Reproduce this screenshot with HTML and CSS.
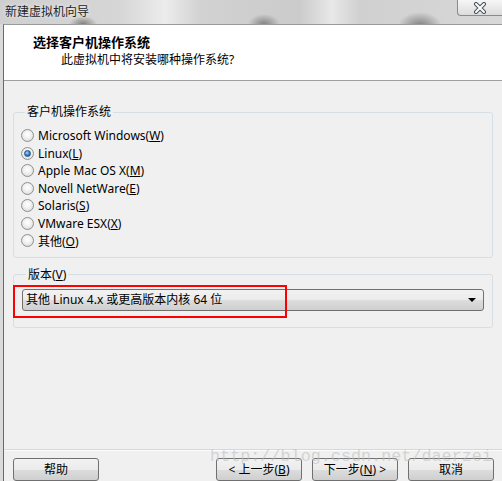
FILE: index.html
```html
<!DOCTYPE html>
<html lang="zh-CN">
<head>
<meta charset="utf-8">
<title>新建虚拟机向导</title>
<link rel="stylesheet" href="styles.css">
</head>
<body>
<div class="screen">
  <div class="titlebar">
    <span class="title">新建虚拟机向导</span>
    <div class="close">
      <svg width="16" height="12" viewBox="0 0 16 12">
        <path d="M4 2 L12 10 M12 2 L4 10" stroke="#4a4f5a" stroke-width="4" stroke-linecap="round"/>
        <path d="M4 2 L12 10 M12 2 L4 10" stroke="#ffffff" stroke-width="2" stroke-linecap="round"/>
      </svg>
    </div>
  </div>
  <div class="window">
    <div class="header">
      <div class="h-title">选择客户机操作系统</div>
      <div class="h-sub">此虚拟机中将安装哪种操作系统?</div>
    </div>
    <div class="content">
      <fieldset class="group os">
        <legend>客户机操作系统</legend>
        <ul class="radios">
          <li><span class="radio"></span><span class="label">Microsoft Windows(<u>W</u>)</span></li>
          <li><span class="radio on"></span><span class="label">Linux(<u>L</u>)</span></li>
          <li><span class="radio"></span><span class="label">Apple Mac OS X(<u>M</u>)</span></li>
          <li><span class="radio"></span><span class="label">Novell NetWare(<u>E</u>)</span></li>
          <li><span class="radio"></span><span class="label">Solaris(<u>S</u>)</span></li>
          <li><span class="radio"></span><span class="label">VMware ESX(<u>X</u>)</span></li>
          <li><span class="radio"></span><span class="label">其他(<u>O</u>)</span></li>
        </ul>
      </fieldset>
      <fieldset class="group ver">
        <legend>版本(<u>V</u>)</legend>
        <div class="select">
          <span class="select-text">其他 Linux 4.x 或更高版本内核 64 位</span>
          <span class="arrow"></span>
        </div>
      </fieldset>
    </div>
    <div class="footer">
      <button class="btn">帮助</button>
      <div class="nav">
        <button class="btn">&lt; 上一步(<u>B</u>)</button>
        <button class="btn">下一步(<u>N</u>) &gt;</button>
        <button class="btn">取消</button>
      </div>
    </div>
  </div>
  <div class="highlight"></div>
  <div class="watermark">http://blog.csdn.net/daerzei</div>
</div>
</body>
</html>
```
FILE: styles.css
```css
html, body {
  margin: 0;
  padding: 0;
}

.screen {
  width: 502px;
  height: 481px;
  position: relative;
  overflow: hidden;
  display: flex;
  flex-direction: column;
  background: #dadada;
  font-family: "Noto Sans", "Noto Sans CJK SC", sans-serif;
  font-size: 12px;
  color: #000;
}

.titlebar {
  height: 24px;
  flex: none;
  display: flex;
  justify-content: space-between;
  align-items: flex-start;
  background:
    radial-gradient(ellipse 14px 8px at 83px 24px, rgba(60,60,60,0.55), rgba(60,60,60,0) 100%),
    radial-gradient(ellipse 16px 10px at 264px 24px, rgba(60,60,60,0.5), rgba(60,60,60,0) 100%),
    radial-gradient(ellipse 22px 14px at 420px 26px, rgba(70,70,70,0.6), rgba(70,70,70,0) 100%),
    linear-gradient(90deg, #cfcfcf 0, #d6d6d6 120px, #ececec 165px, #d2d2d2 200px, #cbcbcb 300px, #e8e8e8 332px, #d0d0d0 360px, #d8d8d8 502px);
}

.title {
  padding-left: 5px;
  line-height: 24px;
  color: #1e1e1e;
  text-shadow: 0 0 4px rgba(255,255,255,0.9);
}

.close {
  width: 45px;
  height: 16px;
  box-sizing: border-box;
  border: 1px solid #8a8a8a;
  border-top: none;
  border-right: none;
  border-radius: 0 0 0 4px;
  background: linear-gradient(#f6f6f6, #dcdcdc);
  display: flex;
  align-items: center;
  justify-content: center;
}

.window {
  flex: 1;
  margin-left: 3px;
  border-left: 1px solid #6a6a6a;
  border-top: 1px solid #9a9a9a;
  background: #f0f0f0;
  display: flex;
  flex-direction: column;
}

.header {
  height: 56px;
  box-sizing: border-box;
  padding: 8px 0 0 29px;
  background: #fff;
  border-bottom: 1px solid #a0a0a0;
  line-height: 18px;
}

.h-title {
  font-weight: bold;
  font-size: 13px;
}

.h-sub {
  padding-left: 28px;
}

.content {
  display: flex;
  flex-direction: column;
}

.group {
  margin: 0 9px;
  border: 1px solid #d5dfe5;
  border-radius: 3px;
  min-width: 0;
}

.group legend {
  margin-left: 4px;
  padding: 0 2px;
  line-height: 16px;
}

.os {
  margin-top: 23px;
  padding: 7px 7px 7px;
}

.radios {
  list-style: none;
  margin: 0;
  padding: 0;
}

.radios li {
  height: 17.5px;
  display: flex;
  align-items: center;
  gap: 4px;
}

.label {
  white-space: nowrap;
}

.radio {
  width: 13px;
  height: 13px;
  box-sizing: border-box;
  border-radius: 50%;
  border: 1px solid #8e8f8f;
  background: radial-gradient(circle at 50% 40%, #ffffff 0, #f4f4f4 35%, #d4d4d4 100%);
  display: flex;
  align-items: center;
  justify-content: center;
  flex: none;
}

.radio.on::after {
  content: "";
  width: 5px;
  height: 5px;
  border-radius: 50%;
  border: 1px solid #1c4f85;
  background: radial-gradient(circle at 40% 35%, #9fd3ff 0, #2f7fcf 55%, #124a8a 100%);
}

.ver {
  margin-top: 9px;
  padding: 6px 8px 16px;
}

.select {
  height: 22px;
  box-sizing: border-box;
  border: 1px solid #707070;
  border-radius: 3px;
  background: linear-gradient(#f2f2f2 0, #ebebeb 50%, #dddddd 50%, #cfcfcf 100%);
  display: flex;
  align-items: center;
  justify-content: space-between;
  padding: 0 7px 0 3px;
}

.select-text {
  line-height: 18px;
}

.arrow {
  width: 0;
  height: 0;
  border-left: 4px solid transparent;
  border-right: 4px solid transparent;
  border-top: 4px solid #000;
}

.footer {
  margin-top: auto;
  border-top: 1px solid #d8d8d8;
  box-shadow: inset 0 1px 0 #fbfbfb;
  padding: 8px 8px 0 9px;
  display: flex;
  justify-content: space-between;
  height: 32px;
  box-sizing: border-box;
}

.nav {
  display: flex;
  gap: 10px;
}

.btn {
  width: 86px;
  height: 23px;
  flex: none;
  border: 1px solid #707070;
  border-radius: 3px;
  background: linear-gradient(#f2f2f2 0, #ebebeb 50%, #dddddd 50%, #cfcfcf 100%);
  font-family: inherit;
  font-size: 12px;
  color: #000;
  padding: 0;
  line-height: 21px;
}

.highlight {
  position: absolute;
  left: 13px;
  top: 285px;
  width: 274px;
  height: 33px;
  box-sizing: border-box;
  border: 2px solid #ff0000;
}

.watermark {
  position: absolute;
  left: 210px;
  top: 447px;
  font-family: "Liberation Mono", monospace;
  font-size: 16.8px;
  line-height: 20px;
  color: rgba(190, 190, 190, 0.6);
  pointer-events: none;
}
```
